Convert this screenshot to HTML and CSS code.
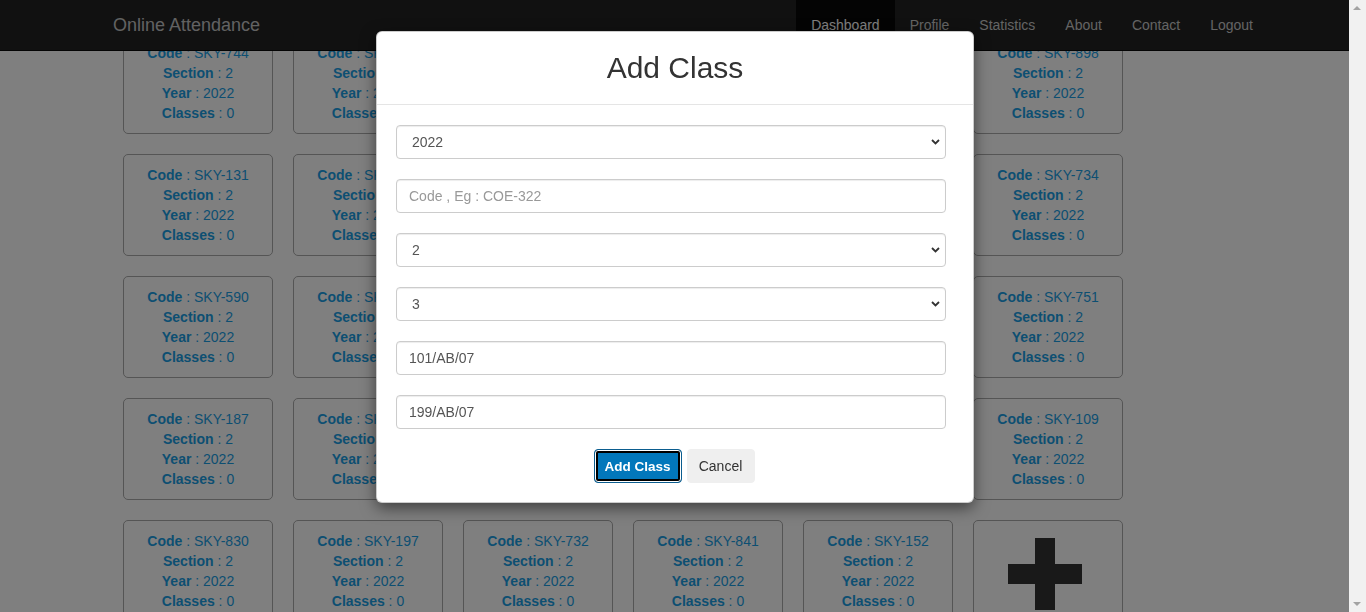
FILE: index.html
```html
<!DOCTYPE html>
<html lang="en">
<head>
<meta charset="utf-8">
<title>Online Attendance</title>
<link rel="stylesheet" href="styles.css">
</head>
<body>
<nav class="navbar">
  <a class="brand" href="#">Online Attendance</a>
  <ul class="nav">
    <li class="active"><a href="#">Dashboard</a></li>
    <li><a href="#">Profile</a></li>
    <li><a href="#">Statistics</a></li>
    <li><a href="#">About</a></li>
    <li><a href="#">Contact</a></li>
    <li><a href="#">Logout</a></li>
  </ul>
</nav>

<main class="cards">
  <div class="card"><div><b>Code</b> : SKY-744</div><div><b>Section</b> : 2</div><div><b>Year</b> : 2022</div><div><b>Classes</b> : 0</div></div>
  <div class="card"><div><b>Code</b> : SKY-512</div><div><b>Section</b> : 2</div><div><b>Year</b> : 2022</div><div><b>Classes</b> : 0</div></div>
  <div class="card"><div><b>Code</b> : SKY-263</div><div><b>Section</b> : 2</div><div><b>Year</b> : 2022</div><div><b>Classes</b> : 0</div></div>
  <div class="card"><div><b>Code</b> : SKY-478</div><div><b>Section</b> : 2</div><div><b>Year</b> : 2022</div><div><b>Classes</b> : 0</div></div>
  <div class="card"><div><b>Code</b> : SKY-305</div><div><b>Section</b> : 2</div><div><b>Year</b> : 2022</div><div><b>Classes</b> : 0</div></div>
  <div class="card"><div><b>Code</b> : SKY-898</div><div><b>Section</b> : 2</div><div><b>Year</b> : 2022</div><div><b>Classes</b> : 0</div></div>

  <div class="card"><div><b>Code</b> : SKY-131</div><div><b>Section</b> : 2</div><div><b>Year</b> : 2022</div><div><b>Classes</b> : 0</div></div>
  <div class="card"><div><b>Code</b> : SKY-624</div><div><b>Section</b> : 2</div><div><b>Year</b> : 2022</div><div><b>Classes</b> : 0</div></div>
  <div class="card"><div><b>Code</b> : SKY-417</div><div><b>Section</b> : 2</div><div><b>Year</b> : 2022</div><div><b>Classes</b> : 0</div></div>
  <div class="card"><div><b>Code</b> : SKY-356</div><div><b>Section</b> : 2</div><div><b>Year</b> : 2022</div><div><b>Classes</b> : 0</div></div>
  <div class="card"><div><b>Code</b> : SKY-982</div><div><b>Section</b> : 2</div><div><b>Year</b> : 2022</div><div><b>Classes</b> : 0</div></div>
  <div class="card"><div><b>Code</b> : SKY-734</div><div><b>Section</b> : 2</div><div><b>Year</b> : 2022</div><div><b>Classes</b> : 0</div></div>

  <div class="card"><div><b>Code</b> : SKY-590</div><div><b>Section</b> : 2</div><div><b>Year</b> : 2022</div><div><b>Classes</b> : 0</div></div>
  <div class="card"><div><b>Code</b> : SKY-208</div><div><b>Section</b> : 2</div><div><b>Year</b> : 2022</div><div><b>Classes</b> : 0</div></div>
  <div class="card"><div><b>Code</b> : SKY-663</div><div><b>Section</b> : 2</div><div><b>Year</b> : 2022</div><div><b>Classes</b> : 0</div></div>
  <div class="card"><div><b>Code</b> : SKY-145</div><div><b>Section</b> : 2</div><div><b>Year</b> : 2022</div><div><b>Classes</b> : 0</div></div>
  <div class="card"><div><b>Code</b> : SKY-379</div><div><b>Section</b> : 2</div><div><b>Year</b> : 2022</div><div><b>Classes</b> : 0</div></div>
  <div class="card"><div><b>Code</b> : SKY-751</div><div><b>Section</b> : 2</div><div><b>Year</b> : 2022</div><div><b>Classes</b> : 0</div></div>

  <div class="card"><div><b>Code</b> : SKY-187</div><div><b>Section</b> : 2</div><div><b>Year</b> : 2022</div><div><b>Classes</b> : 0</div></div>
  <div class="card"><div><b>Code</b> : SKY-246</div><div><b>Section</b> : 2</div><div><b>Year</b> : 2022</div><div><b>Classes</b> : 0</div></div>
  <div class="card"><div><b>Code</b> : SKY-530</div><div><b>Section</b> : 2</div><div><b>Year</b> : 2022</div><div><b>Classes</b> : 0</div></div>
  <div class="card"><div><b>Code</b> : SKY-819</div><div><b>Section</b> : 2</div><div><b>Year</b> : 2022</div><div><b>Classes</b> : 0</div></div>
  <div class="card"><div><b>Code</b> : SKY-472</div><div><b>Section</b> : 2</div><div><b>Year</b> : 2022</div><div><b>Classes</b> : 0</div></div>
  <div class="card"><div><b>Code</b> : SKY-109</div><div><b>Section</b> : 2</div><div><b>Year</b> : 2022</div><div><b>Classes</b> : 0</div></div>

  <div class="card"><div><b>Code</b> : SKY-830</div><div><b>Section</b> : 2</div><div><b>Year</b> : 2022</div><div><b>Classes</b> : 0</div></div>
  <div class="card"><div><b>Code</b> : SKY-197</div><div><b>Section</b> : 2</div><div><b>Year</b> : 2022</div><div><b>Classes</b> : 0</div></div>
  <div class="card"><div><b>Code</b> : SKY-732</div><div><b>Section</b> : 2</div><div><b>Year</b> : 2022</div><div><b>Classes</b> : 0</div></div>
  <div class="card"><div><b>Code</b> : SKY-841</div><div><b>Section</b> : 2</div><div><b>Year</b> : 2022</div><div><b>Classes</b> : 0</div></div>
  <div class="card"><div><b>Code</b> : SKY-152</div><div><b>Section</b> : 2</div><div><b>Year</b> : 2022</div><div><b>Classes</b> : 0</div></div>
  <div class="card card-add">
    <svg class="plus" width="74" height="72" viewBox="0 0 74 72"><path d="M27 0h20v26h27v20H47v26H27V46H0V26h27z" fill="#333"/></svg>
  </div>
</main>

<div class="backdrop"></div>

<div class="modal-wrap">
  <div class="modal">
    <div class="modal-header"><h2 class="modal-title">Add Class</h2></div>
    <form class="modal-body">
      <div class="select-wrap">
        <select class="field"><option>2022</option></select>
        <svg class="chev" width="9" height="6" viewBox="0 0 9 6"><path d="M1 1l3.5 3.5L8 1" fill="none" stroke="#333" stroke-width="1.8"/></svg>
      </div>
      <input class="field" type="text" placeholder="Code , Eg : COE-322">
      <div class="select-wrap">
        <select class="field"><option>2</option></select>
        <svg class="chev" width="9" height="6" viewBox="0 0 9 6"><path d="M1 1l3.5 3.5L8 1" fill="none" stroke="#333" stroke-width="1.8"/></svg>
      </div>
      <div class="select-wrap">
        <select class="field"><option>3</option></select>
        <svg class="chev" width="9" height="6" viewBox="0 0 9 6"><path d="M1 1l3.5 3.5L8 1" fill="none" stroke="#333" stroke-width="1.8"/></svg>
      </div>
      <input class="field" type="text" value="101/AB/07">
      <input class="field" type="text" value="199/AB/07">
      <div class="actions">
        <button type="button" class="btn btn-primary">Add Class</button>
        <button type="button" class="btn btn-cancel">Cancel</button>
      </div>
    </form>
  </div>
</div>

<div class="scrollbar">
  <span class="arrow up"></span>
  <span class="arrow down"></span>
</div>
</body>
</html>
```

FILE: styles.css
```css
* { box-sizing: border-box; }

html, body {
  margin: 0;
  padding: 0;
}

body {
  font-family: "Liberation Sans", Arial, sans-serif;
  font-size: 14px;
  line-height: 20px;
  color: #333;
  background: #fff;
  width: 1349px;
  overflow: hidden;
  height: 612px;
}

/* navbar */
.navbar {
  position: fixed;
  top: 0;
  left: 0;
  right: 17px;
  height: 51px;
  background: #222;
  border-bottom: 1px solid #080808;
  display: flex;
  align-items: stretch;
  justify-content: space-between;
  padding: 0 81px 0 113px;
  z-index: 10;
}

.brand {
  font-size: 18px;
  line-height: 50px;
  color: #c4c4c4;
  text-decoration: none;
}

.nav {
  list-style: none;
  margin: 0;
  padding: 0;
  display: flex;
}

.nav li a {
  display: block;
  padding: 0 15px;
  line-height: 50px;
  font-size: 14px;
  color: #c8c8c8;
  text-decoration: none;
}

.nav li.active a {
  background: #080808;
  color: #fff;
}

/* cards */
.cards {
  display: grid;
  grid-template-columns: repeat(6, 150px);
  gap: 20px;
  padding: 32px 0 0 123px;
}

.card {
  height: 102px;
  border: 1px solid #aaa;
  border-radius: 5px;
  padding: 10px 0;
  text-align: center;
  color: #1a9ee4;
  font-size: 14px;
  line-height: 20px;
}

.card b { font-weight: bold; }

.card-add {
  padding: 17px 0 0 34px;
  text-align: left;
}

.plus { display: block; }

/* backdrop */
.backdrop {
  position: fixed;
  top: 0;
  left: 0;
  right: 17px;
  bottom: 0;
  background: rgba(0, 0, 0, 0.5);
  z-index: 20;
}

/* modal */
.modal-wrap {
  position: fixed;
  top: 0;
  left: 0;
  right: 17px;
  bottom: 0;
  z-index: 30;
}

.modal {
  width: 598px;
  margin: 31px 0 0 376px;
  background: #fff;
  border: 1px solid rgba(0, 0, 0, 0.2);
  border-radius: 6px;
  box-shadow: 0 5px 15px rgba(0, 0, 0, 0.5);
}

.modal-header {
  padding: 20px;
  border-bottom: 1px solid #e5e5e5;
  text-align: center;
}

.modal-title {
  margin: 0;
  font-size: 30px;
  line-height: 32px;
  font-weight: normal;
  color: #333;
}

.modal-body {
  margin: 0;
  padding: 20px 27px 19px 19px;
  display: flex;
  flex-direction: column;
  gap: 20px;
}

.select-wrap {
  position: relative;
}

.field {
  display: block;
  width: 550px;
  height: 34px;
  margin: 0;
  padding: 6px 12px;
  border: 1px solid #ccc;
  border-radius: 4px;
  background: #fff;
  font-family: "Liberation Sans", Arial, sans-serif;
  font-size: 14px;
  line-height: 20px;
  color: #555;
  box-shadow: inset 0 1px 1px rgba(0, 0, 0, 0.075);
  outline: none;
}

select.field {
  appearance: none;
  -webkit-appearance: none;
  padding-left: 15px;
}

.field::placeholder {
  color: #999;
}

.chev {
  position: absolute;
  left: 535px;
  top: 14px;
}

.actions {
  display: flex;
  justify-content: center;
  gap: 5px;
  margin-top: 0;
  padding-left: 6px;
}

.btn {
  height: 34px;
  border-radius: 4px;
  font-family: "Liberation Sans", Arial, sans-serif;
  cursor: pointer;
}

.btn-primary {
  width: 88px;
  padding: 0;
  background: #0277bb;
  border: 1px solid #0b5d8f;
  box-shadow: inset 0 0 0 1px #fff, inset 0 0 0 3px #000;
  color: #fff;
  font-size: 13.5px;
  font-weight: bold;
}

.btn-cancel {
  width: 68px;
  padding: 0;
  background: #efefef;
  border: 1px solid #efefef;
  color: #333;
  font-size: 14px;
}

/* scrollbar */
.scrollbar {
  position: fixed;
  top: 0;
  right: 0;
  width: 17px;
  height: 100%;
  background: #f1f1f1;
  z-index: 40;
}

.arrow {
  position: absolute;
  left: 4px;
  width: 0;
  height: 0;
  border-left: 4px solid transparent;
  border-right: 4px solid transparent;
}

.arrow.up {
  top: 6px;
  border-bottom: 4px solid #a3a3a3;
}

.arrow.down {
  bottom: 6px;
  border-top: 4px solid #a3a3a3;
}
```
